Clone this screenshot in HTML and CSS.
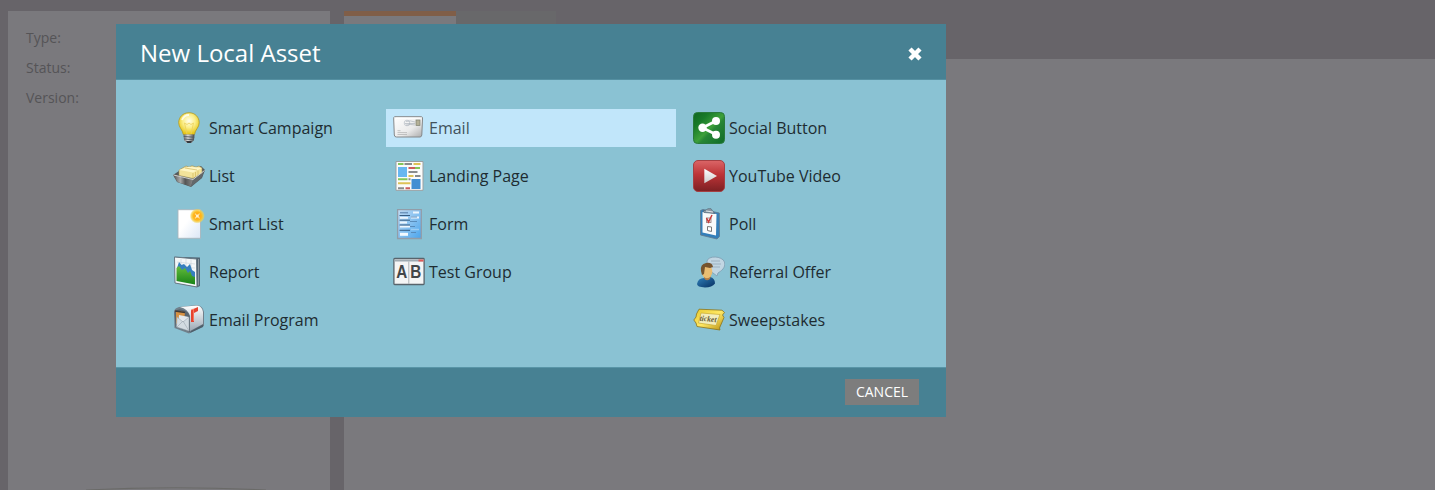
FILE: index.html
```html
<!DOCTYPE html>
<html lang="en">
<head>
<meta charset="utf-8">
<title>New Local Asset</title>
<link rel="stylesheet" href="styles.css">
</head>
<body>
<main class="workspace">
  <aside class="summary">
    <p>Type:</p><p>Status:</p><p>Version:</p>
    <svg class="summary-arc" viewBox="0 0 180 3"><path d="M0 3Q90 -1.5 180 3" fill="none" stroke="#6a6a68" stroke-width="1.1"/></svg>
  </aside>
  <section class="content">
    <div class="tabs"><div class="tab tab-active"></div><div class="tab"></div></div>
    <div class="canvas"></div>
  </section>
</main>

<div class="dialog" role="dialog" aria-label="New Local Asset">
  <header class="dialog-head">
    <h1>New Local Asset</h1>
    <svg class="close" viewBox="0 0 16 16"><path d="M3 3l10 10M13 3l-10 10" stroke="#fff" stroke-width="4.5"/></svg>
  </header>
  <div class="dialog-body">
    <div class="column">
      <div class="item">
        <svg class="icon" viewBox="0 0 32 32"><defs><radialGradient id="bulb" cx=".5" cy=".38" r=".6"><stop offset="0" stop-color="#fffdec"/><stop offset=".5" stop-color="#fbee8a"/><stop offset="1" stop-color="#e6c616"/></radialGradient><linearGradient id="metal"><stop offset="0" stop-color="#666"/><stop offset=".4" stop-color="#ddd"/><stop offset="1" stop-color="#444"/></linearGradient></defs>
          <path d="M16 .7C9.8 .7 5.7 5.3 5.7 10.7C5.700 15.500 9.500 17.500 10.300 22.500H21.500C22.200 17.500 26.200 15.500 26.200 10.700C26.200 5.300 22.200 .7 16 .7Z" fill="url(#bulb)" stroke="#b59a1f" stroke-width=".8"/>
          <path d="M14 22L11.500 11L14 12.500L16 11L18 12.500L20.500 11L18 22" fill="none" stroke="#ecd05a" stroke-width=".8"/><path d="M9 8Q11 3 16 3" fill="none" stroke="#fff" stroke-width="1.800" opacity=".8"/>
          <path d="M10.500 22.500H21.500L21 28L18.500 31H13.500L11 28Z" fill="url(#metal)"/><path d="M10.700 24.500L21.300 25.200M11 27L21 27.800" stroke="#4f5960" stroke-width=".9"/><path d="M13 29H19L17.700 31H14.300Z" fill="#33383d"/></svg>
        <span>Smart Campaign</span></div>
      <div class="item">
        <svg class="icon" viewBox="0 0 32 32"><defs><linearGradient id="tray"><stop offset="0" stop-color="#555"/><stop offset=".35" stop-color="#aaa"/><stop offset=".6" stop-color="#555"/><stop offset="1" stop-color="#888"/></linearGradient></defs>
          <path d="M0 15L6 11L28 6L32 10L29 18L18 27L4 22Z" fill="#555a5c"/><path d="M.5 15L20 20L18 26.500L4.500 22Z" fill="url(#tray)"/><path d="M20 20L31.500 10.500L28.500 18L18 26.500Z" fill="#63686b"/>
          <path d="M6 10L13 6L16 7L19 5.700L23 7L26 6L29 8V13L20 18.500L6 15.500Z" fill="#f3e39a" stroke="#9c8f58" stroke-width=".6"/><path d="M6 10L20 12.500L29 8L16 6.700Z" fill="#fff6c5"/><path d="M20 13V18M22.500 12V17M25 10.500V15.500M12 8L24 10" stroke="#d3b75c" stroke-width=".7"/><path d="M.5 15L20 19.500L31.500 10.500" fill="none" stroke="#cfd0cf" stroke-width="1"/></svg>
        <span>List</span></div>
      <div class="item">
        <svg class="icon" viewBox="0 0 32 32"><defs><linearGradient id="paper" x2="1" y2="1"><stop offset="0" stop-color="#fff"/><stop offset=".4" stop-color="#fff"/><stop offset="1" stop-color="#dbe7f6"/></linearGradient><radialGradient id="glow"><stop offset="0" stop-color="#ff9a16"/><stop offset=".55" stop-color="#ffb91d"/><stop offset=".8" stop-color="#f5cf45" stop-opacity=".75"/><stop offset="1" stop-color="#efd45b" stop-opacity="0"/></radialGradient></defs>
          <path d="M5 1.700H27.500V30.300H5Z" fill="url(#paper)" stroke="#a9b5bc" stroke-width=".9"/><circle cx="24.300" cy="8" r="7.600" fill="url(#glow)"/><path d="M22 5.700L26.600 10.300M26.600 5.700L22 10.300" stroke="#ffe09a" stroke-width="1.100"/><circle cx="24.300" cy="8" r="1.500" fill="#fff2c8"/></svg>
        <span>Smart List</span></div>
      <div class="item">
        <svg class="icon" viewBox="0 0 32 32"><defs><linearGradient id="green" y2="1" x2="0"><stop offset="0" stop-color="#66bd3c"/><stop offset="1" stop-color="#188318"/></linearGradient></defs>
          <path d="M1.500 .8L27 1.500V30L24.500 31.300L2 27Z" fill="#526675"/><path d="M1.500 1L23.500 3L24 31L2 27Z" fill="#f4f7f8" stroke="#687985"/><path d="M4 6L22 8M4 11L22 12M8 3V25M13 3V25M18 3V25" stroke="#c8d1d9" stroke-width=".6"/>
          <path d="M4 12L6 6L8.500 9L11 8L14 11L17 8L19 14L22 16V27L4 23Z" fill="#367fbe"/><path d="M3.500 12L6 10L9 14L12 12L15 17L17 15L19 20L22 21V28.500L3.500 25Z" fill="url(#green)"/><path d="M25.500 3V29.500" stroke="#8a979f" stroke-width="1"/></svg>
        <span>Report</span></div>
      <div class="item">
        <svg class="icon" viewBox="0 0 32 32"><defs><linearGradient id="box" x2="0" y2="1"><stop offset="0" stop-color="#fff"/><stop offset="1" stop-color="#9ba8b4"/></linearGradient></defs>
          <path d="M1 7Q2 4 6 3L24 1Q30 2 31 8V22L16 29.500L1.500 24Z" fill="#71808b"/><path d="M7 3L24 1.500Q29 2 30 8V20L17 27V12Q15 5 7 3Z" fill="url(#box)"/><path d="M1.500 8Q5 4 10 6Q16 7 17 14V28L2.500 23Z" fill="#59646e"/><path d="M3 8L8 7L12 9L11 16L3 20Z" fill="#d69143"/><path d="M2 7L12 8.500" stroke="#403a35" stroke-width="1.300"/>
          <path d="M6 11L16 13V26L5 22Z" fill="#e3e8ec"/><path d="M4 13L10 18L16 13V27L3.500 23Z" fill="#d3dbe1" stroke="#98a4ae" stroke-width=".6"/><path d="M4 23L10 17L16 27" fill="none" stroke="#9da8b1" stroke-width=".6"/><path d="M18 6L25 3V7L21 9V18H18Z" fill="#e5432f"/><path d="M18 6L20.500 5V17" fill="none" stroke="#ff8b71" stroke-width=".7"/><path d="M18 27L30 20.500V23L17 29Z" fill="#4e5f6b"/></svg>
        <span>Email Program</span></div>
    </div>
    <div class="column column-mid">
      <div class="item item-selected">
        <svg class="icon" viewBox="0 0 32 32"><defs><linearGradient id="env" x2="1" y2="1"><stop offset="0" stop-color="#fff"/><stop offset=".6" stop-color="#ebebeb"/><stop offset="1" stop-color="#aaa"/></linearGradient></defs>
          <path d="M1.500 4.700H28.500Q30 5 29.500 7L28.800 23Q28.500 25 27 25H3.500Q1.500 25 1.300 23L.7 7Q.5 5 1.500 4.700Z" fill="url(#env)" stroke="#85888a" stroke-width="1"/><path d="M3 6.200H27.500" stroke="#fff"/><rect x="23" y="8" width="4" height="5.500" fill="#b5b197" stroke="#7d7f70" stroke-width=".7"/><circle cx="14" cy="11" r="2.800" fill="none" stroke="#b5bcc4" stroke-width=".7"/><path d="M13 9.500Q17 8 22 10M12 11.500H22M13 13Q18 12 22 13" fill="none" stroke="#a2abb5" stroke-width=".6"/><path d="M4.500 18.700H7.500M4.500 20.600H14M4.500 22.500H14" stroke="#b5b5b5" stroke-width=".8"/></svg>
        <span>Email</span></div>
      <div class="item">
        <svg class="icon" viewBox="0 0 32 32"><path d="M3 1.500H30V30.300H3Z" fill="#fbfbfa" stroke="#9b9fa1"/><path d="M5 4H10.500M14.500 19.200H5M22 8H27" stroke="#83c65a" stroke-width="1.900"/><path d="M11.500 4H19M15.500 12H24.500M22 16H27.500M5 28.200H11M15.500 19.200H17.500" stroke="#8a8c8c" stroke-width="1.900"/><path d="M20.500 4H27.500M15.500 16H20.500M5 23.200H17.500" stroke="#dec257" stroke-width="1.900"/><path d="M15.500 8H22M12.500 28.200H17" stroke="#cc5c5c" stroke-width="1.900"/><rect x="5" y="7" width="9" height="10" fill="#67b7f1"/><rect x="18.500" y="19" width="9" height="10" fill="#418fd2"/></svg>
        <span>Landing Page</span></div>
      <div class="item">
        <svg class="icon" viewBox="0 0 32 32"><defs><linearGradient id="form" x2="1" y2="1"><stop offset="0" stop-color="#c4ddf4"/><stop offset="1" stop-color="#4aa5ed"/></linearGradient></defs><path d="M4.600 1.700H28.300V30.500H4.600Z" fill="url(#form)" stroke="#929da8" stroke-width="1.300"/><path d="M7 4.700H15" stroke="#6f96bd" stroke-width="1.500"/><path d="M20 4.500H26M7 9.800H15M7 14.500H14M7 18.500H17M18 9.500H26" stroke="#edf6fd" stroke-width="1.800"/><path d="M6.500 7.500H17M6.500 12.200H17M6.500 17H17M6.500 22.300H17" stroke="#385d82" stroke-width="1"/><path d="M18 9H24M17 13.500H24M17 18.500H22M18 24.500H23" stroke="#5587b6" stroke-width=".9"/><path d="M7 26.300H15" stroke="#f4faff" stroke-width="3"/><path d="M18 21.500H26" stroke="#9bcdf4" stroke-width="1.500"/></svg>
        <span>Form</span></div>
      <div class="item">
        <svg class="icon" viewBox="0 0 32 32"><rect x=".9" y="2.500" width="30.200" height="26" rx=".8" fill="#f4f5f5" stroke="#58646c" stroke-width="1.300"/><path d="M1.500 4.500H30.500" stroke="#9fabb2" stroke-width="2"/><path d="M25.500 4.500H30.500" stroke="#df5b58" stroke-width="2"/><path d="M15.800 5.500V28" stroke="#adb2b5"/><text x="3.200" y="22.200" class="ab" textLength="11" lengthAdjust="spacingAndGlyphs">A</text><text x="17.300" y="22.200" class="ab" textLength="11" lengthAdjust="spacingAndGlyphs">B</text></svg>
        <span>Test Group</span></div>
    </div>
    <div class="column column-right">
      <div class="item">
        <svg class="icon" viewBox="0 0 32 32"><defs><linearGradient id="share" x2="1" y2="1"><stop offset="0" stop-color="#116620"/><stop offset=".25" stop-color="#187a29"/><stop offset=".52" stop-color="#3ea03a"/><stop offset=".6" stop-color="#278635"/><stop offset="1" stop-color="#0f6b28"/></linearGradient></defs><rect x=".5" y=".5" width="31" height="31" rx="4" fill="url(#share)" stroke="#297a3b"/><path d="M23 9L9.500 15.800L23 22.500" fill="none" stroke="#fff" stroke-width="2.800"/><circle cx="23" cy="9" r="4" fill="#fff"/><circle cx="9.500" cy="15.800" r="4.200" fill="#fff"/><circle cx="23" cy="22.700" r="4" fill="#fff"/></svg>
        <span>Social Button</span></div>
      <div class="item">
        <svg class="icon" viewBox="0 0 32 32"><defs><linearGradient id="video" x2="0" y2="1"><stop offset="0" stop-color="#db6667"/><stop offset=".45" stop-color="#bd3437"/><stop offset="1" stop-color="#7c2023"/></linearGradient><linearGradient id="play" x2="0" y2="1"><stop offset="0" stop-color="#fff"/><stop offset="1" stop-color="#ccc"/></linearGradient></defs><rect x=".5" y=".5" width="31" height="31" rx="4.500" fill="url(#video)" stroke="#a44043"/><path d="M11.300 8.700L24 16L11.300 23.200Z" fill="url(#play)"/></svg>
        <span>YouTube Video</span></div>
      <div class="item">
        <svg class="icon" viewBox="0 0 32 32"><path d="M7.500 2.500L10 1.500L26.300 5L26.500 28.500L24 31L7.500 27Z" fill="#347fb9" stroke="#61788d" stroke-width=".8"/><path d="M9.500 4L23.500 6L23 27.500L9.500 24.500Z" fill="#f8fafb"/><path d="M10 3L13 2L15 .7H18L20 3.500L22 5.500L11 4.500Z" fill="#8c99a5" stroke="#536371" stroke-width=".6"/><path d="M13 3L20 4" stroke="#dae3e8"/><rect x="13.500" y="10" width="4.500" height="4.500" fill="#f6eeee" stroke="#8e7474" stroke-width=".8"/><path d="M13.500 10L15.500 14L19 7" fill="none" stroke="#c93c3c" stroke-width="1.500"/><path d="M14.500 18.500L18.500 19V23.500L14.500 22.500Z" fill="#fff" stroke="#777" stroke-width="1"/></svg>
        <span>Poll</span></div>
      <div class="item">
        <svg class="icon" viewBox="0 0 32 32"><defs><linearGradient id="person" x2="1" y2="1"><stop offset="0" stop-color="#3181bb"/><stop offset="1" stop-color="#062f61"/></linearGradient></defs><path d="M14 5C15-.5 29-.5 31.500 6C33 12 28 15 25 17L24 20L20 17Q13 15 14 5Z" fill="#c1d6e3" stroke="#86a6b9"/><path d="M18 5H27M18 8H28M19 11H27" stroke="#9aafbd" stroke-width=".9"/><path d="M4 28Q5 22 11 22L17 21Q22 22 22 27.500Q19 31.500 12 31.500Q4 31 4 28Z" fill="url(#person)"/><path d="M11 20L18 19L17 23Q13 26 11 22Z" fill="#b17d47"/><ellipse cx="14" cy="15.500" rx="5.300" ry="6.800" fill="#e9bd72"/><path d="M8 15Q7 8 13 7Q19 6 20 11L17 12L12 11L11 18L9 19Z" fill="#76542e"/></svg>
        <span>Referral Offer</span></div>
      <div class="item">
        <svg class="icon" viewBox="0 0 32 32"><defs><linearGradient id="ticket" x2="1" y2="1"><stop offset="0" stop-color="#e5c72b"/><stop offset=".5" stop-color="#ffe864"/><stop offset="1" stop-color="#b58d13"/></linearGradient></defs><path d="M6 5.200L29 6.200L31.500 8.500L29.500 11L31 13.500L26.500 24L27 26L4 22.500L3 19L.8 16L3 13L3.500 10Z" fill="url(#ticket)" stroke="#8b741b" stroke-width=".8"/><path d="M8 9L27 10.500L23 21.500L5.500 19Z" fill="#f3edbd" stroke="#c7a932" stroke-width=".7"/><text x="6.500" y="17.500" class="ticket-text" textLength="17" lengthAdjust="spacingAndGlyphs" transform="rotate(5 15 16)">ticket</text></svg>
        <span>Sweepstakes</span></div>
    </div>
  </div>
  <footer class="dialog-foot"><button class="cancel">CANCEL</button></footer>
</div>
</body>
</html>
```
FILE: styles.css
```css
* { box-sizing: border-box; }
body { margin: 0; width: 1435px; height: 490px; overflow: hidden; background: #676469; font-family: "Open Sans", sans-serif; }
.workspace { display: flex; gap: 14.500px; height: 490px; padding: 11px 0 0 8px; }
.summary { position: relative; width: 321.500px; padding: 12px 18px; background: #7a797d; color: #555457; font-size: 14px; line-height: 30px; }
.summary p { margin: 0; }
.summary-arc { position: absolute; left: 78px; bottom: 0; width: 180px; height: 3px; }
.content { flex: 1; display: flex; flex-direction: column; }
.tabs { display: flex; height: 48px; }
.tab { width: 100px; background: #68686a; }
.tab-active { width: 112px; background: #7a797d; border-top: 5px solid #805e48; }
.canvas { flex: 1; background: #7a797d; }
.dialog { position: absolute; left: 116px; top: 24px; width: 830px; height: 393px; display: flex; flex-direction: column; background: #8ac2d3; }
.dialog-head { height: 56px; display: flex; align-items: center; justify-content: space-between; padding: 0 23px 0 24px; background: #478193; border-bottom: 1px solid #548fa1; }
.dialog-head h1 { margin: 0; padding-top: 2px; font-size: 24px; font-weight: 400; line-height: 32px; color: #fff; }
.close { width: 16px; height: 16px; margin-top: 4px; }
.dialog-body { height: 287px; display: grid; grid-template-columns: 270px 290px 270px; padding-top: 29px; }
.column { display: flex; flex-direction: column; gap: 10px; padding-left: 50px; }
.column-mid { padding-left: 0; }
.column-right { padding-left: 10px; }
.item { height: 38px; display: flex; align-items: center; gap: 4px; padding-left: 7px; font-size: 16px; line-height: 24px; color: #1e2c31; white-space: nowrap; }
.item-selected { background: #c1e6fa; color: #42525c; }
.icon { width: 32px; height: 32px; flex: none; }
.ab { font: 700 17.500px "Liberation Sans", sans-serif; fill: #434749; }
.ticket-text { font: italic 700 8px "Liberation Serif", serif; fill: #635a36; }
.dialog-foot { height: 50px; display: flex; align-items: center; justify-content: flex-end; padding: 0 27px 2px 0; background: #478193; border-top: 1px solid #5895a7; }
.cancel { width: 74px; height: 26px; padding: 0; border: 0; background: #7d7d7d; color: #fff; font: 14px/26px "Open Sans", sans-serif; }
```
